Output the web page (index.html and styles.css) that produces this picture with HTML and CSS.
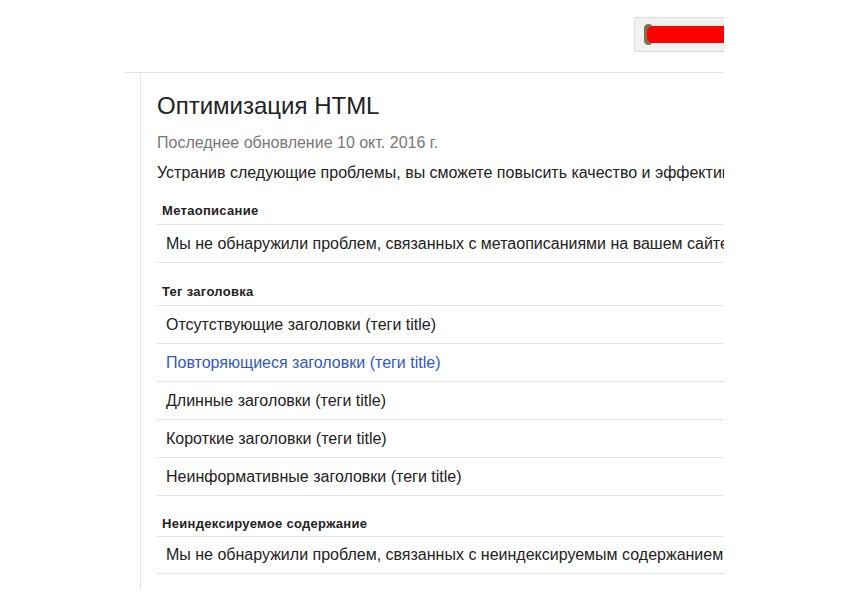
FILE: index.html
```html
<!DOCTYPE html>
<html lang="ru">
<head>
<meta charset="utf-8">
<title>Оптимизация HTML</title>
<link rel="stylesheet" href="styles.css">
</head>
<body>
<div class="viewport">
  <header class="topbar">
    <div class="account-btn">
      <span class="account-icon"></span>
      <span class="account-redact"></span>
    </div>
  </header>
  <div class="rule"></div>
  <main class="panel">
    <h1 class="title">Оптимизация HTML</h1>
    <p class="updated">Последнее обновление 10 окт. 2016 г.</p>
    <p class="intro">Устранив следующие проблемы, вы сможете повысить качество и эффективность своего сайта.</p>

    <section class="group">
      <h2 class="group-head">Метаописание</h2>
      <div class="row">Мы не обнаружили проблем, связанных с метаописаниями на вашем сайте.</div>
    </section>

    <section class="group">
      <h2 class="group-head">Тег заголовка</h2>
      <div class="row">Отсутствующие заголовки (теги title)</div>
      <div class="row"><a class="link" href="#">Повторяющиеся заголовки (теги title)</a></div>
      <div class="row">Длинные заголовки (теги title)</div>
      <div class="row">Короткие заголовки (теги title)</div>
      <div class="row">Неинформативные заголовки (теги title)</div>
    </section>

    <section class="group group-last">
      <h2 class="group-head">Неиндексируемое содержание</h2>
      <div class="row row-compact">Мы не обнаружили проблем, связанных с неиндексируемым содержанием на вашем сайте.</div>
    </section>
  </main>
</div>
</body>
</html>
```

FILE: styles.css
```css
html, body {
  margin: 0;
  padding: 0;
  background: #fff;
}

body {
  font-family: "Liberation Sans", Arial, sans-serif;
  color: #222;
}

.viewport {
  width: 724px;
  height: 600px;
  overflow: hidden;
}

.topbar {
  height: 72px;
  display: flex;
  align-items: flex-start;
  padding-left: 634px;
  box-sizing: border-box;
}

.account-btn {
  margin-top: 17px;
  width: 140px;
  height: 35px;
  flex-shrink: 0;
  box-sizing: border-box;
  background: #f1f1f1;
  border: 1px solid #dcdcdc;
  border-radius: 2px;
  display: flex;
  align-items: center;
  padding-left: 11px;
  position: relative;
}

.account-icon {
  position: absolute;
  left: 9px;
  top: 6px;
  width: 9px;
  height: 21px;
  border-radius: 5px;
  background: #77724f;
}

.account-redact {
  position: relative;
  margin-left: 1px;
  width: 130px;
  height: 17px;
  background: #ff0000;
  border-radius: 6px 0 0 6px;
}

.rule {
  margin-left: 125px;
  height: 1px;
  background: #e5e5e5;
}

.panel {
  margin-left: 140px;
  height: 517px;
  box-sizing: border-box;
  border-left: 1px solid #e5e5e5;
  padding: 19px 0 0 16px;
}

.title {
  margin: 0;
  font-size: 24px;
  line-height: 28px;
  font-weight: normal;
  color: #222;
  white-space: nowrap;
}

.updated {
  margin: 13px 0 0;
  font-size: 16px;
  line-height: 20px;
  color: #777;
  white-space: nowrap;
}

.intro {
  margin: 10px 0 0;
  font-size: 16px;
  line-height: 20px;
  color: #222;
  white-space: nowrap;
}

.group {
  margin-top: 20px;
}

.group + .group {
  margin-top: 21px;
}

.group.group-last {
  margin-top: 20px;
}

.group-head {
  margin: 0;
  padding: 0 0 5px 5px;
  font-size: 13px;
  line-height: 16px;
  font-weight: bold;
  color: #222;
  letter-spacing: 0.3px;
  border-bottom: 1px solid #e5e5e5;
  white-space: nowrap;
}

.group-last .group-head {
  padding-bottom: 4px;
}

.row {
  height: 37px;
  display: flex;
  align-items: center;
  padding-left: 9px;
  font-size: 16px;
  color: #222;
  border-bottom: 1px solid #e5e5e5;
  white-space: nowrap;
}

.row-compact {
  height: 36px;
}

.link {
  color: #3357c7;
  text-decoration: none;
}
```
